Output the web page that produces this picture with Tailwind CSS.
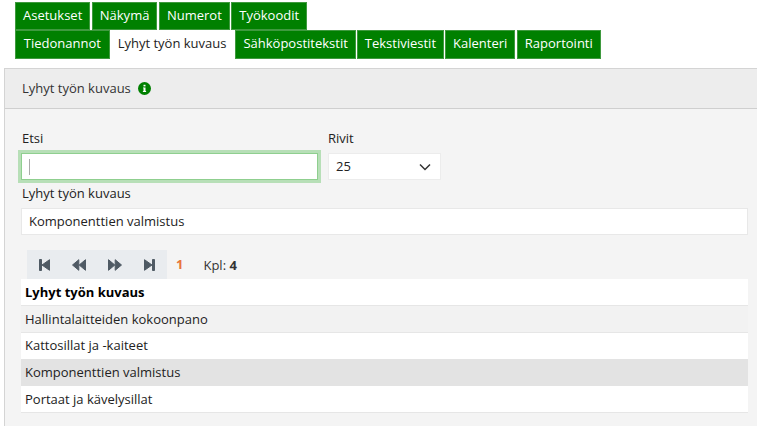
<!DOCTYPE html>
<html lang="fi">
  <head>
    <meta charset="UTF-8" />
    <title>Lyhyt työn kuvaus</title>
    <script src="https://cdn.jsdelivr.net/npm/@tailwindcss/browser@4"></script>
  </head>
  <body class="h-[426px] overflow-hidden bg-white font-['Open_Sans',sans-serif] text-[13px] text-[#222]">
    <!-- Tabs -->
    <div class="flex h-[28px] mt-[2px] ml-[15px] gap-[1.5px]">
      <a class="flex items-center pb-[1px] px-[7px] bg-[#008000] border border-[#3f9a3f] text-white">Asetukset</a>
      <a class="flex items-center pb-[1px] px-[7px] bg-[#008000] border border-[#3f9a3f] text-white">Näkymä</a>
      <a class="flex items-center pb-[1px] px-[7px] bg-[#008000] border border-[#3f9a3f] text-white">Numerot</a>
      <a class="flex items-center pb-[1px] px-[7px] bg-[#008000] border border-[#3f9a3f] text-white">Työkoodit</a>
    </div>
    <div class="flex h-[29px] ml-[15px]">
      <a class="flex items-center pb-[1px] px-[7.75px] bg-[#008000] border border-[#3f9a3f] text-white">Tiedonannot</a>
      <a class="flex items-center pb-[1px] pl-[8px] pr-[9px] bg-white text-[#222]">Lyhyt työn kuvaus</a>
      <a class="flex items-center pb-[1px] px-[7px] bg-[#008000] border border-[#3f9a3f] text-white">Sähköpostitekstit</a>
      <a class="flex items-center pb-[1px] ml-[1px] px-[7px] bg-[#008000] border border-[#3f9a3f] text-white">Tekstiviestit</a>
      <a class="flex items-center pb-[1px] ml-[1px] px-[7px] bg-[#008000] border border-[#3f9a3f] text-white">Kalenteri</a>
      <a class="flex items-center pb-[1px] ml-[1.5px] px-[7px] bg-[#008000] border border-[#3f9a3f] text-white">Raportointi</a>
    </div>

    <!-- Panel -->
    <div class="mt-[9px] ml-[4px] h-[358px] bg-[#f4f4f4] border-l border-t border-[#d4d4d4]">
      <div class="flex items-center gap-[7px] h-[40px] pl-[17px] bg-[#ededed] border-b border-[#cfcfcf] text-[#333]">
        <span>Lyhyt työn kuvaus</span>
        <svg class="w-[13px] h-[13px]" viewBox="0 0 13 13">
          <circle cx="6.5" cy="6.5" r="6.5" fill="#008000" />
          <rect x="5.5" y="2.8" width="2" height="1.6" fill="#fff" />
          <path d="M5 5.4h2.5v3.6h.6v1H4.9V9h.6V6.3H5z" fill="#fff" />
        </svg>
      </div>

      <div class="pl-[16px]">
        <!-- Search row -->
        <div class="flex mt-[21px] gap-[10px]">
          <div>
            <label class="block h-[23px] leading-[16px] pl-[1px]">Etsi</label>
            <div class="flex items-center w-[297px] h-[27px] pl-[7px] bg-white border border-[#8fcf8f] outline-[3px] outline-[#b7dfb7]">
              <div class="w-[1px] h-[16px] bg-[#aaa]"></div>
            </div>
          </div>
          <div>
            <label class="block h-[23px] leading-[16px]">Rivit</label>
            <div class="flex items-center justify-between w-[113px] h-[27px] px-[7px] bg-white border border-[#ececec]">
              <span>25</span>
              <svg class="w-[12px] h-[8px] mr-[2px]" viewBox="0 0 12 8" fill="none" stroke="#333" stroke-width="1.5">
                <path d="M1 1.5l5 5 5-5" />
              </svg>
            </div>
          </div>
        </div>

        <label class="block mt-[5px] h-[23px] leading-[16px] pl-[1px]">Lyhyt työn kuvaus</label>
        <div class="flex items-center w-[727px] h-[27px] pt-[1px] px-[7px] bg-white border border-[#e8e8e8]">Komponenttien valmistus</div>

        <!-- Pager -->
        <div class="flex items-center h-[29px] mt-[15px] ml-[6px]">
          <div class="flex items-center gap-[22px] w-[140px] h-[29px] pl-[12px] bg-[#e9ecef]">
            <svg class="w-[11px] h-[12px]" viewBox="0 0 11 12" fill="#4f5a64" stroke="#4f5a64" stroke-linejoin="round"><path d="M.5.5h2v11h-2zM10.5.7v10.6L3 6z" /></svg>
            <svg class="w-[14px] h-[12px]" viewBox="0 0 14 12" fill="#4f5a64" stroke="#4f5a64" stroke-linejoin="round"><path d="M6.8.7v10.6L.5 6zM13.5.7v10.6L7.2 6z" /></svg>
            <svg class="w-[14px] h-[12px]" viewBox="0 0 14 12" fill="#4f5a64" stroke="#4f5a64" stroke-linejoin="round"><path d="M.5.7v10.6L6.8 6zM7.2.7v10.6L13.5 6z" /></svg>
            <svg class="w-[11px] h-[12px]" viewBox="0 0 11 12" fill="#4f5a64" stroke="#4f5a64" stroke-linejoin="round"><path d="M.5.7v10.6L8 6zM8.5.5h2v11h-2z" /></svg>
          </div>
          <span class="ml-[9px] font-bold text-[#e8743b]">1</span>
          <span class="ml-[20px] pt-[2px] text-[#333]">Kpl: <b>4</b></span>
        </div>

        <!-- Table -->
        <div class="w-[727px]">
          <div class="flex items-center h-[26.75px] pt-[2px] px-[4px] bg-white border-b border-[#e6e6e6] font-bold text-black">Lyhyt työn kuvaus</div>
          <div class="flex items-center h-[26.75px] pt-[2px] px-[4px] bg-[#f2f2f2] border-b border-[#e6e6e6]">Hallintalaitteiden kokoonpano</div>
          <div class="flex items-center h-[26.75px] px-[4px] bg-white">Kattosillat ja -kaiteet</div>
          <div class="flex items-center h-[26.75px] px-[4px] bg-[#e3e3e3]">Komponenttien valmistus</div>
          <div class="flex items-center h-[26.75px] pt-[2px] px-[4px] bg-white border-b border-[#e6e6e6]">Portaat ja kävelysillat</div>
        </div>
      </div>
    </div>
  </body>
</html>
